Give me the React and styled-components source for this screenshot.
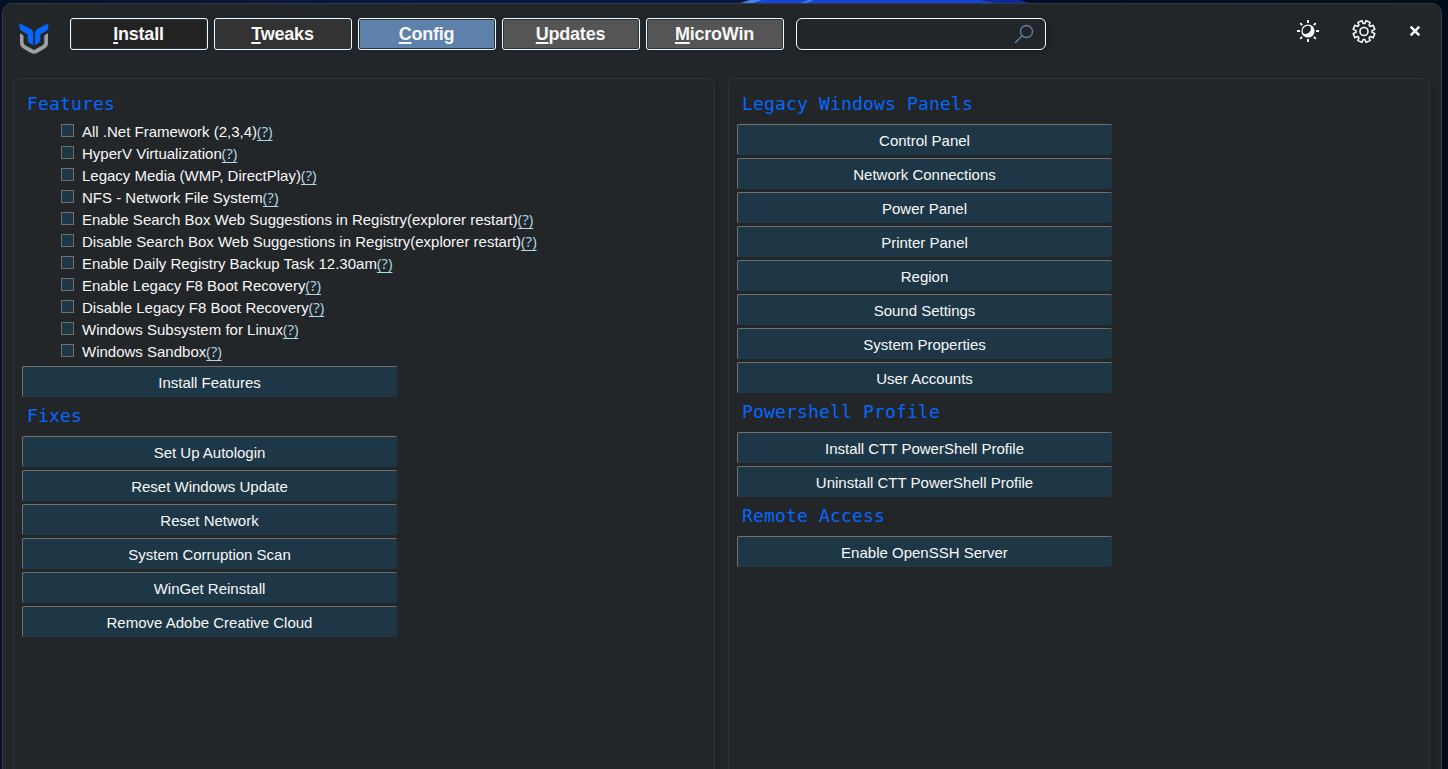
import React from 'react';
import styled, { createGlobalStyle, css } from 'styled-components';

const Global = createGlobalStyle`
  * { box-sizing: border-box; }
  html, body { margin: 0; height: 100%; overflow: hidden; background: #020a1e; }
  #root { height: 100%; }
`;

const Desktop = styled.div`
  position: relative;
  height: 769px;
  width: 1448px;
  padding: 3px 6px 0 2px;
  overflow: hidden;
  background: linear-gradient(90deg, #041129 0, #071a45 30%, #071a45 50%, #020c26 75%, #010c1a 100%);
`;

const Wallpaper = styled.svg`
  position: absolute;
  left: 730px;
  top: 0;
`;

const Window = styled.main`
  position: relative;
  display: flex;
  flex-direction: column;
  height: 780px;
  border: 1px solid #34383f;
  border-radius: 10px;
  background: #232629;
  font-family: "Liberation Sans", Arial, sans-serif;
  color: #f7f7f7;
`;

const TopBar = styled.header`
  display: flex;
  height: 74px;
  padding: 14px 15px 0 16px;
`;

const Logo = styled.svg`
  width: 30px;
  height: 34px;
  margin: 4px 21px 0 0;
`;

const Tabs = styled.nav`
  display: flex;
  gap: 6px;
`;

const Tab = styled.button`
  width: 138px;
  height: 32px;
  padding: 0 1px 0 0;
  border: 1px solid #f7f7f7;
  border-radius: 3px;
  box-shadow: inset 0 0 0 1px #1e3747;
  background: ${p => p.$bg};
  color: #f7f7f7;
  font: bold 18px/30px "Liberation Sans", Arial, sans-serif;
  letter-spacing: -0.22px;
`;

const AccessKey = styled.span`
  text-decoration: underline;
  text-decoration-thickness: 2px;
  text-underline-offset: 2px;
  text-decoration-skip-ink: none;
`;

const Search = styled.div`
  display: flex;
  justify-content: flex-end;
  align-items: center;
  width: 250px;
  height: 32px;
  margin-left: 12px;
  padding-right: 11px;
  border: 1px solid #f7f7f7;
  border-radius: 6px;
  box-shadow: 2px 2px 5px rgba(0, 0, 0, 0.35);
`;

const Actions = styled.div`
  display: flex;
  align-items: center;
  height: 26px;
  margin-left: auto;
`;

const ThemeIcon = styled.svg`
  width: 24px;
  height: 24px;
  margin-right: 31px;
`;

const GearIcon = styled.svg`
  width: 26px;
  height: 26px;
  margin-right: 32px;
`;

const CloseIcon = styled.svg`
  width: 12px;
  height: 12px;
  margin-right: 5px;
`;

const Panels = styled.div`
  display: grid;
  grid-template-columns: 702px 702px;
  column-gap: 13px;
  flex: 1;
  padding-left: 10px;
`;

const Panel = styled.section`
  padding: 10px 8px 0;
  border: 1px solid #2f3337;
  border-radius: 7px;
  box-shadow: 3px 2px 6px rgba(0, 0, 0, 0.16);
`;

const Heading = styled.h2`
  height: 31px;
  margin: 0 0 4px 5px;
  font: normal 18px/30px "DejaVu Sans Mono", monospace;
  letter-spacing: 0.16px;
  color: #0567ff;
  ${p => p.$later && css`height: 36px; margin-bottom: 0; line-height: 32px;`}
`;

const Features = styled.ul`
  margin: -3px 0 3px;
  padding: 0 0 0 39px;
  list-style: none;
  height: 242px;
`;

const Feature = styled.li`
  display: flex;
  height: 22px;
  font-size: 15px;
  line-height: 22px;
  white-space: nowrap;
`;

const Checkbox = styled.span`
  width: 13px;
  height: 13px;
  margin: 3px 8px 0 0;
  border: 1px solid #6f6f6f;
  background: #1e3747;
`;

const Help = styled.a`
  margin-top: -1px;
  font-family: "Open Sans", sans-serif;
  font-size: 15.2px;
  color: #add8e6;
  text-decoration: underline;
  text-decoration-skip-ink: none;
  text-decoration-thickness: 1px;
  text-underline-offset: 3px;
`;

const Buttons = styled.div`
  display: flex;
  flex-direction: column;
  gap: 3px;
  margin-bottom: 3px;
`;

const Action = styled.button`
  width: 375px;
  height: 31px;
  padding: 2px 1px 0 0;
  border: 0 solid #6f6f6f;
  border-width: 1px 0 0 1px;
  border-radius: 2px;
  background: #1e3747;
  color: #f7f7f7;
  font: 15px/28px "Liberation Sans", Arial, sans-serif;
`;

const tabs = [
  ['Install', '#222222'],
  ['Tweaks', '#333333'],
  ['Config', '#5e81ac'],
  ['Updates', '#555555'],
  ['MicroWin', '#555555'],
];

const features = [
  'All .Net Framework (2,3,4)',
  'HyperV Virtualization',
  'Legacy Media (WMP, DirectPlay)',
  'NFS - Network File System',
  'Enable Search Box Web Suggestions in Registry(explorer restart)',
  'Disable Search Box Web Suggestions in Registry(explorer restart)',
  'Enable Daily Registry Backup Task 12.30am',
  'Enable Legacy F8 Boot Recovery',
  'Disable Legacy F8 Boot Recovery',
  'Windows Subsystem for Linux',
  'Windows Sandbox',
];

const fixes = [
  'Set Up Autologin',
  'Reset Windows Update',
  'Reset Network',
  'System Corruption Scan',
  'WinGet Reinstall',
  'Remove Adobe Creative Cloud',
];

const legacyPanels = [
  'Control Panel',
  'Network Connections',
  'Power Panel',
  'Printer Panel',
  'Region',
  'Sound Settings',
  'System Properties',
  'User Accounts',
];

const profile = ['Install CTT PowerShell Profile', 'Uninstall CTT PowerShell Profile'];

function ActionList({ items }) {
  return (
    <Buttons>
      {items.map(label => <Action key={label}>{label}</Action>)}
    </Buttons>
  );
}

/* Outline of an eight-toothed cog centred on the origin. */
function cogPath(outer, inner) {
  const points = [];
  for (let i = 0; i < 8; i += 1) {
    const mid = (i * Math.PI) / 4 + Math.PI / 8;
    [[-0.29, inner], [-0.2, outer], [0.2, outer], [0.29, inner]].forEach(([d, r]) => {
      points.push(`${(Math.cos(mid + d) * r).toFixed(2)} ${(Math.sin(mid + d) * r).toFixed(2)}`);
    });
  }
  return `M${points.join('L')}Z`;
}

export default function App() {
  return (
    <>
      <Global />
      <Desktop>
        <Wallpaper width="310" height="4" viewBox="0 0 310 4">
          <path d="M8 4L20 0H290L302 4Z" fill="#0a2a9a" />
          <path d="M8 4L20 0H250L268 4Z" fill="#1544dc" />
          <path d="M8 4L20 0H32L20 4Z" fill="#4a82ec" />
          <path d="M70 4L82 0" stroke="#3e78f0" strokeWidth="2" />
        </Wallpaper>
        <Window>
          <TopBar>
            <Logo viewBox="0 0 30 34">
              <path d="M1 11.300L4.500 13.500V20q0 2.300 2 3.500L15 28l8.300-4.500q2-1.200 2-3.500v-6.500L29 11.300V21.500q0 3-2.500 4.500L19 30.500 15 32l-4-1.500L3.500 26Q1 24.500 1 21.500Z" fill="#9d9fa1" />
              <path d="M.3 1.300L10.500 6.300Q14.300 8 14.300 12V23L11.500 21.700Q8.700 20.500 8.700 17.500V12.300L3 9.300Q.5 8 .4 5Z" fill="#0567ff" />
              <path d="M29.300 1.300L19.800 6.300Q16 8 16 12V23L18.500 21.700Q21.300 20.500 21.300 17.500V12.300L26.800 9.300Q29.200 8 29.300 5Z" fill="#0567ff" />
            </Logo>
            <Tabs>
              {tabs.map(([label, bg]) => (
                <Tab key={label} $bg={bg}>
                  <AccessKey>{label[0]}</AccessKey>{label.slice(1)}
                </Tab>
              ))}
            </Tabs>
            <Search>
              <svg width="20" height="20" viewBox="0 0 20 20" fill="none" stroke="#5e81ac" strokeWidth="1.3">
                <circle cx="12.500" cy="7.500" r="6" />
                <path d="M8.200 11.800L1 19" />
              </svg>
            </Search>
            <Actions>
              <ThemeIcon viewBox="-12 -12 24 24" fill="none" stroke="#f7f7f7">
                <circle r="6.600" fill="#f7f7f7" stroke="none" />
                <path d="M-4.800 2.200A5.300 5.300 0 0 1 2.200-4.800A5.200 5.200 0 0 1-4.800 2.200Z" fill="#232629" stroke="none" />
                <path d="M0-11v3M0 11V8M-11 0h3M11 0H8M-7.800-7.800l2 2M7.800-7.800l-2 2M-7.800 7.800l2-2M7.800 7.800l-2-2" strokeWidth="1.900" />
              </ThemeIcon>
              <GearIcon viewBox="-13 -13.500 26 26" fill="none" stroke="#f7f7f7" strokeWidth="1.600" strokeLinejoin="round">
                <path d={cogPath(11, 8)} />
                <circle r="4" />
              </GearIcon>
              <CloseIcon viewBox="0 0 12 12">
                <path d="M1.700 1.700l8.600 8.600M10.300 1.700L1.700 10.300" stroke="#fff" strokeWidth="2.400" />
              </CloseIcon>
            </Actions>
          </TopBar>
          <Panels>
            <Panel>
              <Heading>Features</Heading>
              <Features>
                {features.map(label => (
                  <Feature key={label}>
                    <Checkbox />
                    <span>{label}</span>
                    <Help>(?)</Help>
                  </Feature>
                ))}
              </Features>
              <ActionList items={['Install Features']} />
              <Heading $later>Fixes</Heading>
              <ActionList items={fixes} />
            </Panel>
            <Panel>
              <Heading>Legacy Windows Panels</Heading>
              <ActionList items={legacyPanels} />
              <Heading $later>Powershell Profile</Heading>
              <ActionList items={profile} />
              <Heading $later>Remote Access</Heading>
              <ActionList items={['Enable OpenSSH Server']} />
            </Panel>
          </Panels>
        </Window>
      </Desktop>
    </>
  );
}
